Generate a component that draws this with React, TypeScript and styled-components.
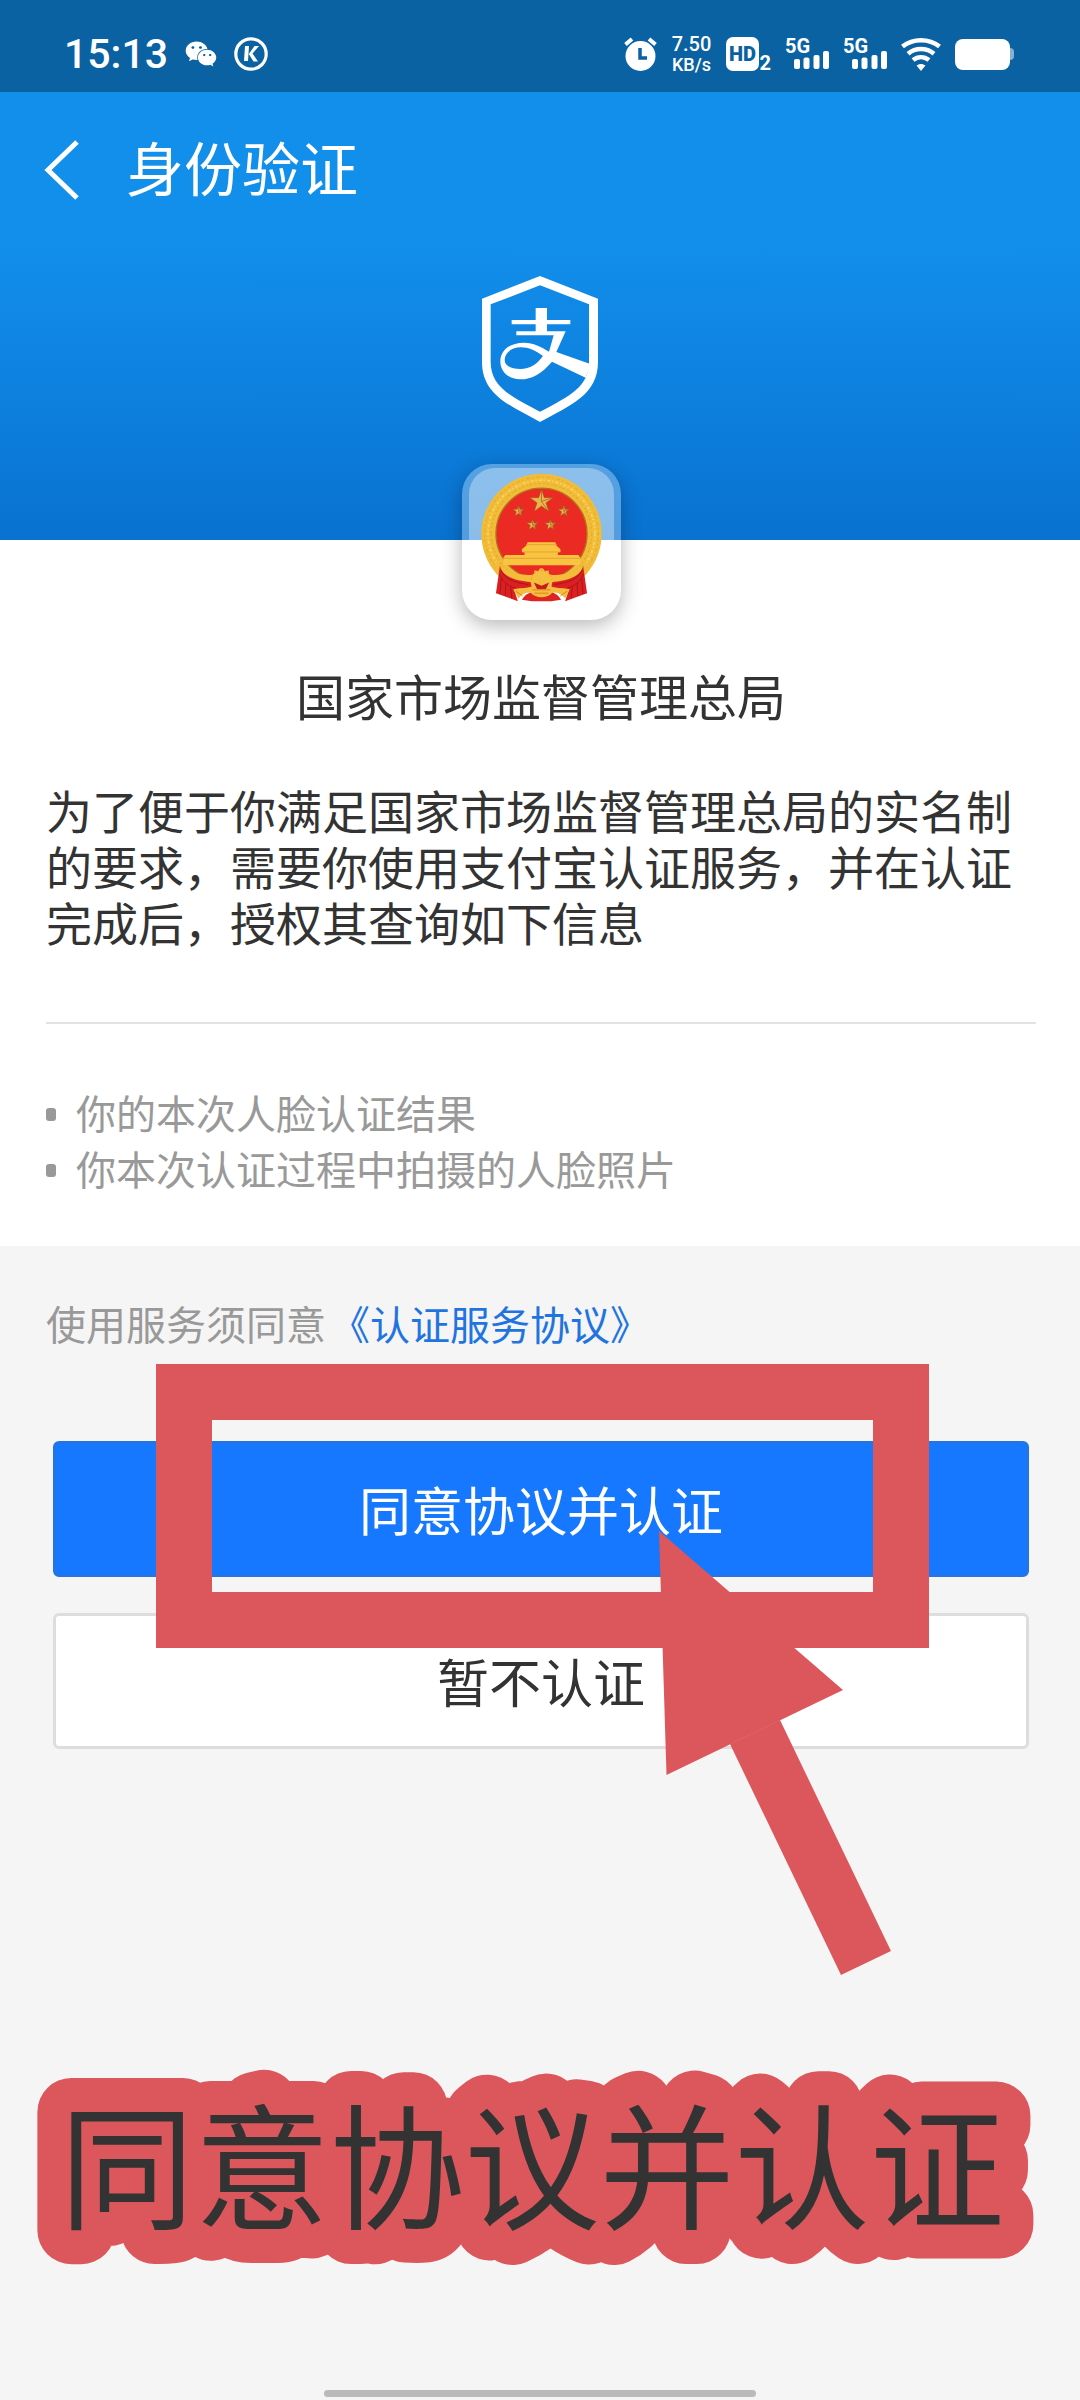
import React from "react";
import styled, { createGlobalStyle } from "styled-components";
import { FaWeixin } from "react-icons/fa";

const red = "#db575c";

const GlobalStyle = createGlobalStyle`
  * { box-sizing: border-box; }
  body {
    margin: 0;
    background: #f5f5f5;
    color: #333;
    font-family: "Noto Sans CJK SC", "Noto Sans", sans-serif;
  }
`;

const Page = styled.div`
  min-height: 100vh;
  display: flex;
  flex-direction: column;
  overflow: hidden;
`;

const StatusBar = styled.div`
  height: 92px;
  padding: 16px 66px 0 64px;
  background: #0b62a2;
  color: #fff;
  display: flex;
  align-items: center;
  justify-content: space-between;
  font-family: Roboto, "Noto Sans", sans-serif;
  svg { display: block; }
`;

const StatusGroup = styled.div<{ $gap: number }>`
  display: flex;
  align-items: center;
  gap: ${(p) => p.$gap}px;
`;

const Clock = styled.time`
  font-size: 41px;
  line-height: 44px;
  font-weight: 500;
`;

const Speed = styled.div`
  width: 41px;
  font-weight: 500;
  text-align: center;
  white-space: nowrap;
`;

const SpeedLine = styled.div<{ $size: number }>`
  font-size: ${(p) => p.$size}px;
  line-height: ${(p) => p.$size + 1}px;
`;

const HdWrap = styled.div`
  width: 45px;
  display: flex;
  align-items: flex-end;
  justify-content: space-between;
  font-size: 20px;
  line-height: 16px;
  font-weight: 700;
`;

const HdBox = styled.span`
  width: 33px;
  height: 34px;
  border-radius: 7px;
  background: #fff;
  color: #0b62a2;
  font-size: 20px;
  font-weight: 900;
  line-height: 34px;
  text-align: center;
`;

const SignalWrap = styled.div`
  width: 44px;
  height: 34px;
  font-size: 20px;
  line-height: 18px;
  font-weight: 700;
  svg { margin: -4px 0 0 auto; }
`;

const Battery = styled.div`
  display: flex;
  align-items: center;
  &::before {
    content: "";
    width: 55px;
    height: 31px;
    border-radius: 8px;
    background: #fff;
  }
  &::after {
    content: "";
    width: 4px;
    height: 12px;
    border-radius: 0 4px 4px 0;
    background: #86b1d2;
  }
`;

const NavBar = styled.header`
  height: 156px;
  padding: 0 44px;
  background: #128eeb;
  color: #fff;
  display: flex;
  align-items: center;
  gap: 46px;
`;

const BackButton = styled.button`
  padding: 0;
  border: 0;
  background: none;
  color: inherit;
  svg { display: block; }
`;

const NavTitle = styled.h1`
  margin: 0;
  padding-bottom: 8px;
  font-size: 58px;
  line-height: 64px;
  font-weight: 400;
`;

const Hero = styled.div`
  height: 292px;
  padding-top: 28px;
  background: linear-gradient(#128eeb, #0972d0);
  display: flex;
  justify-content: center;
  align-items: flex-start;
`;

const Consent = styled.section`
  padding: 0 44px 50px 46px;
  background: #fff;
`;

const LogoCard = styled.div`
  position: relative;
  width: 159px;
  height: 156px;
  margin: -76px auto 0;
  padding: 4px 7px;
  border-radius: 30px;
  background: rgba(255, 255, 255, 0.3);
  box-shadow: 0 6px 20px rgba(0, 0, 0, 0.28);
`;

const LogoInner = styled.div`
  height: 100%;
  padding-top: 5px;
  border-radius: 26px;
  background: rgba(255, 255, 255, 0.33);
  display: flex;
  justify-content: center;
`;

const OrgName = styled.h2`
  margin: 41px 0 0;
  font-size: 49px;
  line-height: 68px;
  font-weight: 400;
  text-align: center;
`;

const Intro = styled.p`
  margin: 52px 0 0;
  font-size: 46px;
  line-height: 56px;
`;

const Divider = styled.hr`
  height: 2px;
  margin: 73px 0 60px;
  border: 0;
  background: #e2e2e2;
`;

const InfoList = styled.ul`
  margin: 0;
  padding: 0;
  list-style: none;
  color: #999;
  font-size: 40px;
  line-height: 56px;
`;

const InfoItem = styled.li`
  display: flex;
  align-items: center;
  gap: 20px;
  &::before {
    content: "";
    width: 10px;
    height: 13px;
    margin-top: 4px;
    border-radius: 3px;
    background: #999;
  }
`;

const Agreement = styled.p`
  margin: 0;
  padding: 49px 46px 0;
  color: #999;
  font-size: 40px;
  line-height: 56px;
`;

const AgreementLink = styled.a`
  margin-left: 4px;
  color: #1f74e0;
  text-decoration: none;
`;

const Actions = styled.div`
  position: relative;
  padding: 90px 51px 0 53px;
  display: flex;
  flex-direction: column;
  gap: 36px;
`;

const ActionButton = styled.button<{ $primary?: boolean }>`
  width: 100%;
  height: 136px;
  padding: 0;
  border: 3px solid ${(p) => (p.$primary ? "#2374e8" : "#ddd")};
  border-radius: 6px;
  background: ${(p) => (p.$primary ? "#1677ff" : "#fff")};
  color: ${(p) => (p.$primary ? "#fff" : "#333")};
  font-family: inherit;
  font-size: 52px;
  line-height: 72px;
`;

const Highlight = styled.div`
  position: absolute;
  top: 13px;
  left: 50%;
  width: 773px;
  height: 284px;
  margin-left: -384px;
  border: 56px solid ${red};
  pointer-events: none;
`;

const Arrow = styled.svg`
  position: absolute;
  top: 180px;
  left: 50%;
  margin-left: 119px;
  pointer-events: none;
`;

const Caption = styled.svg`
  display: block;
  width: 100%;
  height: 200px;
  margin-top: 320px;
  padding-right: 16px;
  overflow: visible;
`;

const CaptionText = styled.text`
  fill: #333;
  stroke: ${red};
  stroke-width: 68px;
  stroke-linejoin: round;
  stroke-linecap: round;
  paint-order: stroke;
  text-anchor: middle;
  font-size: 135px;
`;

const HomeIndicator = styled.div`
  width: 432px;
  height: 7px;
  margin: auto auto 3px;
  border-radius: 4px;
  background: #bababa;
`;

const AlarmIcon = () => (
  <svg width="33" height="34" viewBox="0 0 33 34" aria-hidden="true">
    <circle cx="16.500" cy="19" r="15" fill="#fff" />
    <path d="M1.500 7.500 8 2M31.500 7.500 25 2" stroke="#fff" strokeWidth="4" />
    <path d="M16 11v10h7" fill="none" stroke="#0b62a2" strokeWidth="3.500" />
  </svg>
);

const KIcon = () => (
  <svg width="34" height="34" viewBox="0 0 34 34" aria-hidden="true">
    <circle cx="17" cy="17" r="15.200" fill="none" stroke="#fff" strokeWidth="3.200" />
    <path d="M11 9h4l-1 15h-4zM20.500 9H25l-6.500 7.500L24 24.500h-4.500L14.800 17z" fill="#fff" />
  </svg>
);

const Signal = () => (
  <SignalWrap>
    5G
    <svg width="35" height="18" viewBox="0 0 35 18" fill="#fff" aria-hidden="true">
      <rect x="0" y="8" width="6" height="10" rx="2" />
      <rect x="9.500" y="6.500" width="6" height="11.500" rx="2" />
      <rect x="19.500" y="4" width="6" height="14" rx="2" />
      <rect x="29" y="0" width="6" height="18" rx="2" />
    </svg>
  </SignalWrap>
);

const WifiIcon = () => (
  <svg width="40" height="34" viewBox="0 0 40 34" fill="none" stroke="#fff" strokeWidth="4.500" aria-hidden="true">
    <path d="M1.500 9.500C12 1 28 1 38.500 9.500" />
    <path d="M7 16.700c7.600-6.200 18.400-6.200 26 0" />
    <path d="M12 23c4.800-3.800 11.200-3.800 16 0" />
    <path d="M15.500 28.600c2.800-2.200 6.200-2.200 9 0L20 34z" fill="#fff" stroke="none" />
  </svg>
);

const ShieldLogo = () => (
  <svg width="116" height="146" viewBox="185 78 348 438" fill="#fff" aria-label="支付宝" role="img">
    <path
      fillRule="evenodd"
      d="M359 78 533 146V335C533 435 450 465 359 516C268 465 185 435 185 335V146ZM359 106 211 163V335C211 410 270 438 359 485C448 438 506 410 506 335V163Z"
    />
    <path
      fillRule="evenodd"
      d="M346 174h34v36h70v13h-70v21h56l-28 62 104 37-16 40-101-48C365 370 335 388 300 388C262 388 240 362 240 335C240 300 270 278 310 278C340 278 362 290 386 305L400 256H288V244h58V223H274V210h72ZM368 318C345 302 325 292 302 292C275 292 253 308 253 330C253 347 272 357 300 357C330 357 350 342 368 318Z"
    />
  </svg>
);

const starPoints = (cx: number, cy: number, r: number) =>
  Array.from({ length: 10 }, (_, i) => {
    const radius = i % 2 ? r * 0.38 : r;
    const a = (i * Math.PI) / 5 - Math.PI / 2;
    return `${(cx + Math.cos(a) * radius).toFixed(1)},${(cy + Math.sin(a) * radius).toFixed(1)}`;
  }).join(" ");

const stars = [
  [197, 108, 37],
  [128, 137, 18],
  [264, 137, 18],
  [170, 178, 18],
  [224, 178, 18],
];

const Emblem = () => (
  <svg width="121" height="130" viewBox="15 23 364 390" aria-hidden="true">
    <path d="M62 326A181 181 0 1 1 332 326L197 350Z" fill="#f1bd38" />
    <circle cx="197" cy="205" r="171" fill="none" stroke="#e6ae32" strokeWidth="4" strokeDasharray="5 9 11 6" />
    <circle cx="197" cy="205" r="161" fill="none" stroke="#f8d564" strokeWidth="5" strokeDasharray="9 5 4 7" />
    <circle cx="197" cy="205" r="151" fill="none" stroke="#e3aa30" strokeWidth="4" strokeDasharray="7 9 4 5" />
    <circle cx="197" cy="205" r="137" fill="#ec2a24" stroke="#b0731f" strokeWidth="4" />
    {stars.map(([x, y, r]) => (
      <React.Fragment key={x}>
        <polygon points={starPoints(x, y, r)} fill="#e8b64c" stroke="#9a5a1c" strokeWidth="1.500" />
        <path d={`M${x} ${y}v${-r}M${x} ${y}l${r * 0.9} ${-r * 0.3}M${x} ${y}l${r * 0.55} ${r * 0.8}`} stroke="#9a5a1c" strokeWidth="2" />
      </React.Fragment>
    ))}
    <path d="M155 231h84l2 9 13 12v9h-8v8h62l6 9v22H82V278l6-9h58v-8h-8v-9l14-12Z" fill="#f9c541" />
    <path d="M151 238h92M143 260h106M84 279h228" stroke="#e5a233" strokeWidth="3" />
    <path d="M62 285C100 335 150 328 172 330c8 4 42 4 50 0 22-2 72 5 110-45l2 40c-30 30-80 38-137 38S92 355 60 325Z" fill="#f3bc3a" />
    <path d="M72 300c4 34 50 48 92 50l4 16c-20 6-38 4-54 6l12 36-66-24Z" fill="#dc2021" />
    <path d="M322 300c-4 34-50 48-92 50l-4 16c20 6 38 4 54 6l-12 36 66-24Z" fill="#dc2021" />
    <path
      d="M74 314c14 28 40 38 84 44M70 326c10 22 24 36 48 42M76 340l-4 46M90 354l-2 38M104 364l4 36M320 314c-14 28-40 38-84 44M324 326c-10 22-24 36-48 42M318 340l4 46M304 354l2 38M290 364l-4 36"
      fill="none"
      stroke="#a5161a"
      strokeWidth="3"
    />
    <path d="M138 404c10-18 30-28 59-28s49 10 59 28l-30 4h-58Z" fill="#dd2421" />
    <path d="M160 348l6-8-2-10 10-4 2-10 11 1 6-8h8l6 8 11-1 2 10 10 4-2 10 6 8-20 8-17-14-17 14Z" fill="#f5c040" />
    <path d="M166 345a31 28 0 0 1 62 0" fill="none" stroke="#e0a02c" strokeWidth="3" strokeDasharray="6 5" />
    <path d="M112 372c26-4 46-2 62-10l23-20 23 20c16 8 36 6 62 10l-14 28c-8-12-22-18-38-18-8 10-20 14-33 14s-25-4-33-14c-16 0-28 6-36 18Z" fill="#f4bd3e" />
    <path d="M174 352l23 10 23-10-10 20h-26Z" fill="#c91c1d" />
    <path d="M170 374h54M176 384h42M120 378l20 14M274 378l-20 14" stroke="#d48b20" strokeWidth="3" />
  </svg>
);

export default function App() {
  return (
    <Page>
      <GlobalStyle />
      <StatusBar>
        <StatusGroup $gap={17}>
          <Clock>15:13</Clock>
          <FaWeixin size={32} aria-hidden="true" />
          <KIcon />
        </StatusGroup>
        <StatusGroup $gap={14}>
          <AlarmIcon />
          <Speed>
            <SpeedLine $size={20}>7.50</SpeedLine>
            <SpeedLine $size={18}>KB/s</SpeedLine>
          </Speed>
          <HdWrap>
            <HdBox>HD</HdBox>2
          </HdWrap>
          <Signal />
          <Signal />
          <WifiIcon />
          <Battery />
        </StatusGroup>
      </StatusBar>

      <NavBar>
        <BackButton type="button" aria-label="返回">
          <svg width="36" height="60" viewBox="0 0 36 60" fill="none" stroke="#fff" strokeWidth="5" aria-hidden="true">
            <path d="M33 2 4 30l29 28" />
          </svg>
        </BackButton>
        <NavTitle>身份验证</NavTitle>
      </NavBar>
      <Hero>
        <ShieldLogo />
      </Hero>

      <Consent>
        <LogoCard>
          <LogoInner>
            <Emblem />
          </LogoInner>
        </LogoCard>
        <OrgName>国家市场监督管理总局</OrgName>
        <Intro>
          为了便于你满足国家市场监督管理总局的实名制的要求，需要你使用支付宝认证服务，并在认证完成后，授权其查询如下信息
        </Intro>
        <Divider />
        <InfoList>
          <InfoItem>你的本次人脸认证结果</InfoItem>
          <InfoItem>你本次认证过程中拍摄的人脸照片</InfoItem>
        </InfoList>
      </Consent>

      <Agreement>
        使用服务须同意<AgreementLink href="#agreement">《认证服务协议》</AgreementLink>
      </Agreement>
      <Actions>
        <ActionButton type="button" $primary>
          同意协议并认证
        </ActionButton>
        <ActionButton type="button">暂不认证</ActionButton>
        <Highlight />
        <Arrow width="233" height="446" viewBox="0 0 233 446" fill={red} aria-hidden="true">
          <path d="M0 0 184 159 7.500 244Z" />
          <path d="M71 213 121 189 232 420 182 444Z" />
        </Arrow>
      </Actions>

      <Caption>
        <CaptionText x="50%" y="150">
          同意协议并认证
        </CaptionText>
      </Caption>
      <HomeIndicator />
    </Page>
  );
}
